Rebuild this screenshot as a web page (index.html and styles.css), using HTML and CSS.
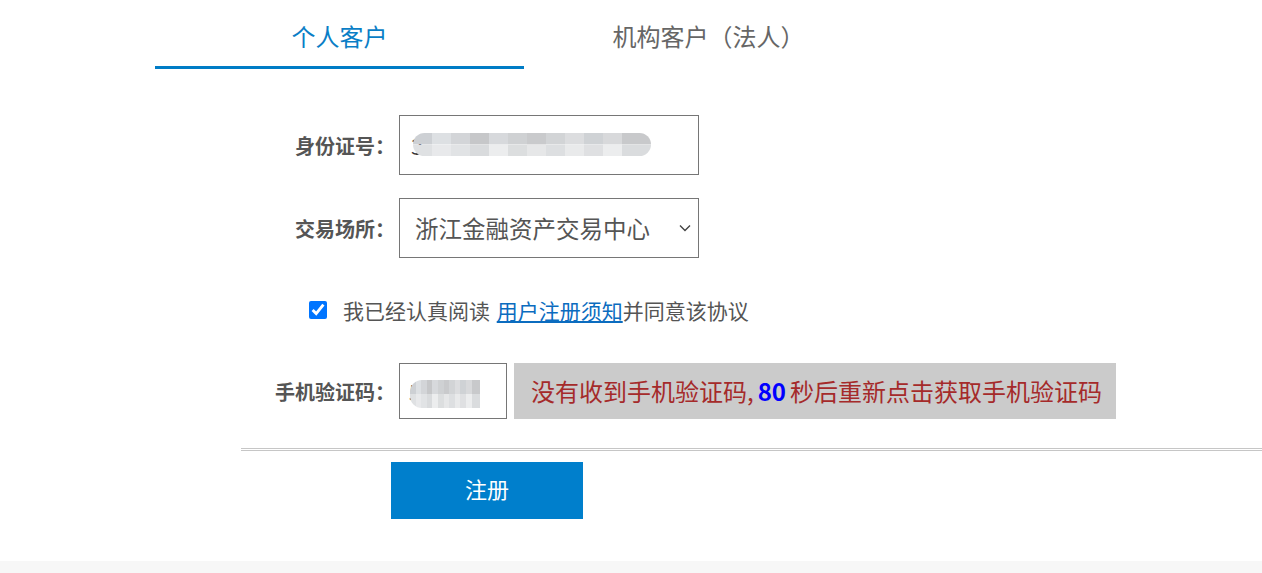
FILE: index.html
```html
<!DOCTYPE html>
<html lang="zh-CN">
<head>
<meta charset="utf-8">
<title>注册</title>
<link rel="stylesheet" href="styles.css">
</head>
<body>
<div class="page">
  <div class="tabs">
    <div class="tab active">个人客户</div>
    <div class="tab">机构客户（法人）</div>
  </div>
  <form class="form">
    <div class="row row-id">
      <label class="label">身份证号：</label>
      <div class="field field-id">
        <input class="input input-id" type="text" value="3">
        <span class="mosaic mosaic-id"></span>
      </div>
    </div>
    <div class="row row-select">
      <label class="label">交易场所：</label>
      <div class="field field-select">
        <select class="select">
          <option>浙江金融资产交易中心</option>
        </select>
        <svg class="chevron" width="12" height="8" viewBox="0 0 12 8"><path d="M1 1.5 L6 6.5 L11 1.5" fill="none" stroke="#444" stroke-width="1.4"/></svg>
      </div>
    </div>
    <div class="agree">
      <input class="check" type="checkbox" checked>
      <span class="agree-text">我已经认真阅读 <a class="agree-link" href="#">用户注册须知</a>并同意该协议</span>
    </div>
    <div class="row row-code">
      <label class="label">手机验证码：</label>
      <div class="field field-code">
        <input class="input input-code" type="text" value="5">
        <span class="mosaic mosaic-code"></span>
      </div>
      <div class="sms-msg">没有收到手机验证码,<b class="count">80</b>秒后重新点击获取手机验证码</div>
    </div>
    <hr class="divider">
    <button class="submit" type="button">注册</button>
  </form>
</div>
<div class="footer"></div>
</body>
</html>
```
FILE: styles.css
```css
html, body {
  margin: 0;
  padding: 0;
  background: #fff;
}
body {
  font-family: "Noto Sans CJK SC", "Noto Sans", sans-serif;
  color: #555;
}
.page {
  height: 561px;
  background: #fff;
  overflow: hidden;
}
.footer {
  height: 12px;
  background: #f7f7f7;
}
.tabs {
  display: flex;
  padding-left: 155px;
}
.tab {
  width: 369px;
  height: 58px;
  padding-top: 8px;
  line-height: 56px;
  text-align: center;
  font-size: 24px;
  color: #666;
  border-bottom: 3px solid transparent;
}
.tab.active {
  color: #0a7ec6;
  border-bottom-color: #007cc6;
}
.form {
  margin: 46px 0 0 0;
}
.row {
  display: flex;
  align-items: center;
}
.row-select {
  margin-top: 23px;
}
.row-code {
  margin-top: 38px;
}
.label {
  width: 395px;
  text-align: right;
  font-size: 20px;
  font-weight: bold;
  color: #555;
  flex-shrink: 0;
}
.field {
  position: relative;
  margin-left: 4px;
}
.input {
  display: block;
  box-sizing: border-box;
  border: 1px solid #767676;
  border-radius: 0;
  background: #fff;
  font-family: inherit;
  color: #333;
  outline: none;
}
.input-id {
  width: 300px;
  height: 60px;
  padding: 0 11px;
  font-size: 22px;
}
.input-code {
  width: 108px;
  height: 56px;
  padding: 0 9px;
  font-size: 22px;
}
.mosaic {
  position: absolute;
  border-radius: 12px;
  background:
    linear-gradient(to right, #cdd0d4 0 8%, #dde0e3 8% 16%, #d3d5d8 16% 24%, #c6c7c9 24% 32%, #d7d9dc 32% 40%, #cfd1d3 40% 48%, #c9cacc 48% 56%, #d2d4d6 56% 64%, #dcdddf 64% 72%, #cfd2d5 72% 80%, #d8d9db 80% 88%, #c8c9cb 88% 100%) top / 100% 50% no-repeat,
    linear-gradient(to right, #dfe1e3 0 8%, #e8e9eb 8% 16%, #e1e3e5 16% 24%, #d9dbdd 24% 32%, #ecedee 32% 40%, #dcdedf 40% 48%, #e6e7e8 48% 56%, #dddfe1 56% 64%, #e9eaeb 64% 72%, #dfe0e2 72% 80%, #ecedee 80% 88%, #dadcde 88% 100%) bottom / 100% 50% no-repeat;
}
.mosaic-id {
  left: 14px;
  top: 18px;
  width: 238px;
  height: 23px;
}
.mosaic-code {
  left: 11px;
  top: 17px;
  width: 70px;
  height: 28px;
  border-radius: 12px 0 0 12px;
}
.select {
  display: block;
  box-sizing: border-box;
  width: 300px;
  height: 60px;
  padding: 0 30px 0 15px;
  border: 1px solid #767676;
  border-radius: 0;
  background: #fff;
  font-family: inherit;
  font-size: 23.5px;
  color: #555;
  appearance: none;
  -webkit-appearance: none;
  outline: none;
}
.chevron {
  position: absolute;
  right: 8px;
  top: 26px;
}
.agree {
  display: flex;
  align-items: center;
  height: 30px;
  margin-top: 37px;
  padding-left: 309px;
}
.check {
  width: 18px;
  height: 18px;
  margin: 0 16px 0 0;
  accent-color: #0075ff;
}
.agree-text {
  font-size: 21px;
  color: #555;
}
.agree-link {
  color: #0b6cbf;
  text-decoration: underline;
  margin-left: 2px;
}
.sms-msg {
  box-sizing: border-box;
  width: 602px;
  height: 56px;
  margin-left: 7px;
  padding-left: 17px;
  background: #cbcbcb;
  color: #a52a2a;
  font-size: 24px;
  line-height: 56px;
  white-space: nowrap;
}
.count {
  color: #0000ff;
  font-weight: bold;
  margin: 0 4px 0 4px;
}
.divider {
  box-sizing: content-box;
  height: 1px;
  margin: 29px 0 0 241px;
  border: none;
  border-top: 1px solid #c6c6c6;
  border-bottom: 1px solid #c6c6c6;
  background: #fff;
}
.submit {
  display: block;
  box-sizing: border-box;
  width: 192px;
  height: 57px;
  margin: 11px 0 0 391px;
  padding: 0 0 5px 0;
  border: none;
  border-radius: 0;
  background: #007fcc;
  color: #fff;
  font-family: inherit;
  font-size: 22px;
}
```
